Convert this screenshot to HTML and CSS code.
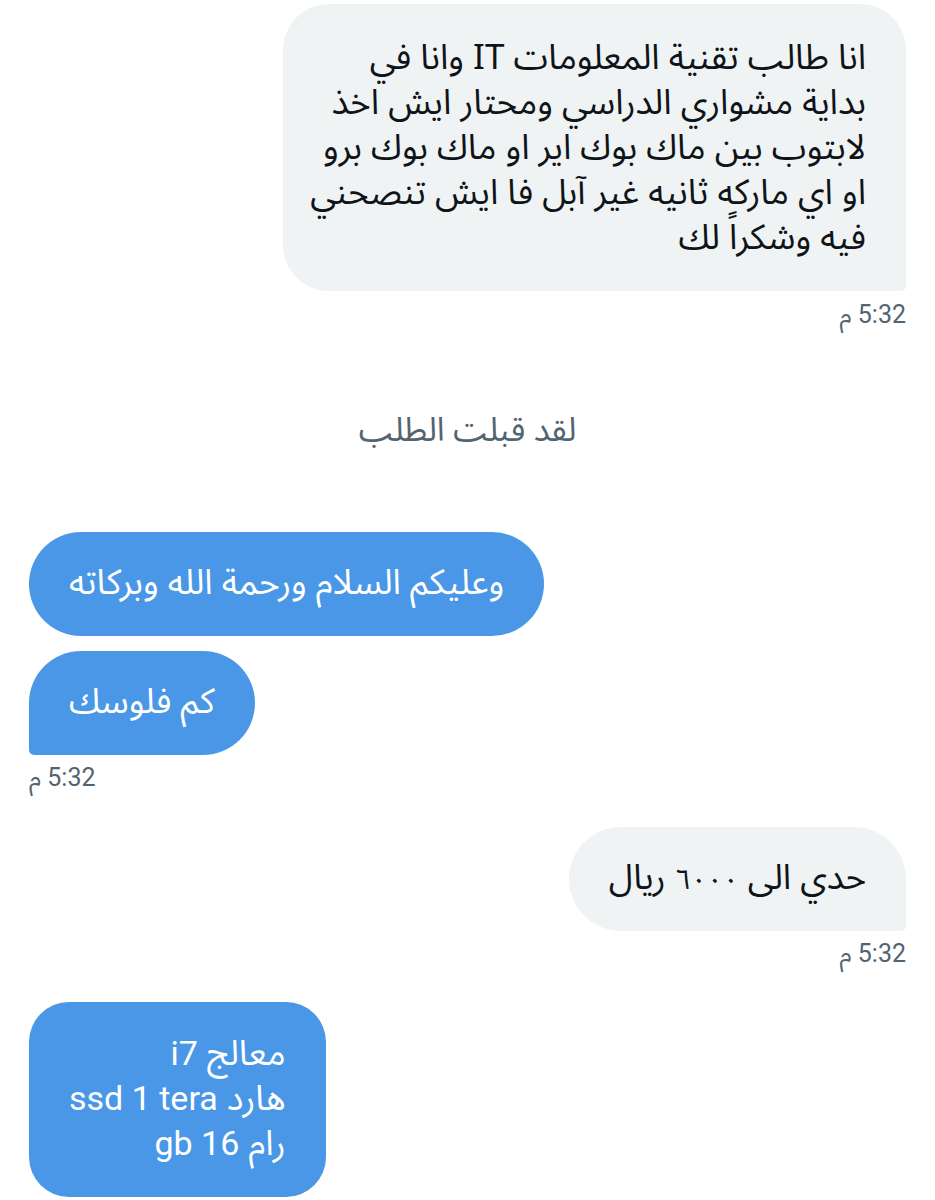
FILE: index.html
```html
<!DOCTYPE html>
<html lang="ar">
<head>
<meta charset="utf-8">
<link rel="stylesheet" href="styles.css">
</head>
<body>
<div class="chat">
  <div class="msg sent first">
    <div class="bubble gray long tail-right">انا طالب تقنية المعلومات IT وانا في<br>بداية مشواري الدراسي ومحتار ايش اخذ<br>لابتوب بين ماك بوك اير او ماك بوك برو<br>او اي ماركه ثانيه غير آبل فا ايش تنصحني<br>فيه وشكراً لك</div>
    <div class="time">5:32 م</div>
  </div>

  <div class="notice">لقد قبلت الطلب</div>

  <div class="msg received">
    <div class="bubble blue pill">وعليكم السلام ورحمة الله وبركاته</div>
    <div class="bubble blue pill tail-left">كم فلوسك</div>
    <div class="time">5:32 م</div>
  </div>

  <div class="msg sent">
    <div class="bubble gray pill tail-right">حدي الى <span class="num">٦٠٠٠</span> ريال</div>
    <div class="time">5:32 م</div>
  </div>

  <div class="msg received last">
    <div class="bubble blue multi">معالج <span class="lat">i7</span><br>هارد <span class="lat">ssd 1 tera</span><br>رام <span class="lat">16 gb</span></div>
  </div>
</div>
</body>
</html>
```

FILE: styles.css
```css
html, body {
  margin: 0;
  padding: 0;
  background: #ffffff;
}

.chat {
  display: flex;
  flex-direction: column;
  padding: 4px 29px 0 29px;
  font-family: "Noto Sans Arabic", "Roboto", "DejaVu Sans", sans-serif;
  direction: rtl;
}

.msg {
  display: flex;
  flex-direction: column;
  gap: 15px;
}

.msg.sent {
  align-items: flex-start;
  margin-bottom: 35px;
}

.msg.sent.first {
  margin-bottom: 0;
}

.msg.received {
  align-items: flex-end;
  margin-bottom: 36px;
}

.bubble {
  font-size: 35px;
  line-height: 45px;
  padding: 30px 40px;
  border-radius: 44px;
  color: #0f1419;
  box-sizing: border-box;
  white-space: nowrap;
}

.bubble.gray {
  background: #eff3f4;
}

.bubble.long {
  width: 623px;
  padding: 32px 40px 30px 40px;
  border-radius: 46px 46px 5px 46px;
}

.bubble.blue {
  background: #4a97e7;
  color: #ffffff;
}

.bubble.pill {
  border-radius: 52px;
  padding: 29px 40px 30px;
}

.bubble.pill.tail-right {
  border-radius: 52px 52px 5px 52px;
}

.bubble.pill.tail-left {
  border-radius: 52px 52px 52px 5px;
}

.bubble.multi {
  border-radius: 40px;
  padding: 30px 40px;
}

.num {
  font-size: 28px;
  line-height: 1;
}

.lat {
  font-family: "Roboto", sans-serif;
  font-size: 34px;
  line-height: 1;
}

.time {
  font-family: "Roboto", "Noto Sans Arabic", "DejaVu Sans", sans-serif;
  font-size: 25px;
  line-height: 26px;
  color: #536471;
  margin-top: -5px;
}

.msg.sent.first .time {
  margin-top: -4px;
}

.notice {
  text-align: center;
  font-size: 33px;
  line-height: 36px;
  color: #536471;
  margin: 85px 0 83px;
}
```
